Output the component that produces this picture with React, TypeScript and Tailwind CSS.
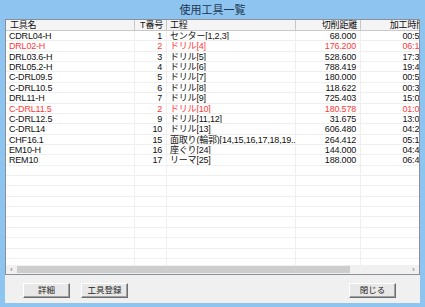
import React from "react";

type Row = { name: string; t: string; proc: string; dist: string; time: string; red?: boolean };

const rows: Row[] = [
  { name: "CDRL04-H", t: "1", proc: "センター[1,2,3]", dist: "68.000", time: "00:57" },
  { name: "DRL02-H", t: "2", proc: "ドリル[4]", dist: "176.200", time: "06:17", red: true },
  { name: "DRL03.6-H", t: "3", proc: "ドリル[5]", dist: "528.600", time: "17:37" },
  { name: "DRL05.2-H", t: "4", proc: "ドリル[6]", dist: "788.419", time: "19:42" },
  { name: "C-DRL09.5", t: "5", proc: "ドリル[7]", dist: "180.000", time: "00:54" },
  { name: "C-DRL10.5", t: "6", proc: "ドリル[8]", dist: "118.622", time: "00:39" },
  { name: "DRL11-H", t: "7", proc: "ドリル[9]", dist: "725.403", time: "15:06" },
  { name: "C-DRL11.5", t: "2", proc: "ドリル[10]", dist: "180.578", time: "01:05", red: true },
  { name: "C-DRL12.5", t: "9", proc: "ドリル[11,12]", dist: "31.675", time: "13:05" },
  { name: "C-DRL14", t: "10", proc: "ドリル[13]", dist: "606.480", time: "04:29" },
  { name: "CHF16.1", t: "15", proc: "面取り(輪郭)[14,15,16,17,18,19...", dist: "264.412", time: "05:14" },
  { name: "EM10-H", t: "16", proc: "座ぐり[24]", dist: "144.000", time: "04:47" },
  { name: "REM10", t: "17", proc: "リーマ[25]", dist: "188.000", time: "06:42" },
];

const blanks = Array.from({ length: 11 }, (_, i) => i);

function Btn({ label }: { label: string }) {
  return (
    <div className="w-[47px] h-[15px] flex items-center justify-center bg-[#e8e8e8] border-t border-l border-t-[#ffffff] border-l-[#ffffff] border-r border-b border-r-[#6d6d6d] border-b-[#6d6d6d] shadow-[inset_-1px_-1px_0_#a0a0a0] text-[8.5px] text-[#222] leading-none">
      {label}
    </div>
  );
}

export default function App() {
  return (
    <div className="w-[425px] h-[307px] bg-[#8ec4f0] flex flex-col font-['Liberation_Sans','Noto_Sans_CJK_JP',sans-serif] overflow-hidden">
      <div className="h-[19px] flex items-center justify-center text-[11px] text-[#1f3550] pt-[1px]">
        使用工具一覧
      </div>
      <div className="mx-[5px] w-[415px] h-[284px] bg-[#f0f0f0] flex flex-col">
        <div className="h-[256px] border border-[#8a8f99] bg-white flex flex-col overflow-hidden">
          <div className="flex-1 overflow-hidden relative">
            <div className="w-[430px] text-[9px] tracking-[-0.2px] text-[#111]">
              <div className="flex h-[11px] leading-[10px] bg-[#f4f4f4] border-b border-[#c9c9c9]">
                <div className="w-[129px] pl-[4px] border-r border-[#c9c9c9]">工具名</div>
                <div className="w-[32px] pr-[3px] text-right border-r border-[#c9c9c9]">T番号</div>
                <div className="w-[129px] pl-[3px] border-r border-[#c9c9c9]">工程</div>
                <div className="w-[65px] pr-[3px] text-right border-r border-[#c9c9c9]">切削距離</div>
                <div className="w-[67px] pr-[3px] text-right whitespace-nowrap">加工時間</div>
              </div>
              {rows.map((r, i) => (
                <div
                  key={i}
                  className={`flex h-[10.37px] leading-[10px] border-b border-[#efefef] whitespace-nowrap ${r.red ? "text-[#ff3a3a]" : ""}`}
                >
                  <div className="w-[129px] pl-[3px] border-r border-[#efefef]">{r.name}</div>
                  <div className="w-[32px] pr-[4px] text-right border-r border-[#efefef]">{r.t}</div>
                  <div className="w-[129px] pl-[3px] border-r border-[#efefef] overflow-hidden">{r.proc}</div>
                  <div className="w-[65px] pr-[4px] text-right border-r border-[#efefef]">{r.dist}</div>
                  <div className="w-[67px] pr-[4px] text-right">{r.time}</div>
                </div>
              ))}
              {blanks.map((b) => (
                <div key={b} className="flex h-[10.37px] border-b border-[#efefef]">
                  <div className="w-[129px] border-r border-[#efefef]" />
                  <div className="w-[32px] border-r border-[#efefef]" />
                  <div className="w-[129px] border-r border-[#efefef]" />
                  <div className="w-[65px] border-r border-[#efefef]" />
                  <div className="w-[67px]" />
                </div>
              ))}
            </div>
          </div>
          <div className="h-[9px] flex items-center bg-[#f0f0f0]">
            <div className="w-[11px] h-full flex items-center justify-center text-[7px] text-[#606060] leading-none">‹</div>
            <div className="w-[333px] h-[7px] bg-[#cdcdcd]" />
            <div className="flex-1" />
            <div className="w-[11px] h-full flex items-center justify-center text-[7px] text-[#606060] leading-none">›</div>
          </div>
        </div>
        <div className="flex-1 flex items-start pt-[8px] pl-[18px] pr-[24px]">
          <Btn label="詳細" />
          <div className="w-[11px]" />
          <Btn label="工具登録" />
          <div className="flex-1" />
          <Btn label="閉じる" />
        </div>
      </div>
    </div>
  );
}
